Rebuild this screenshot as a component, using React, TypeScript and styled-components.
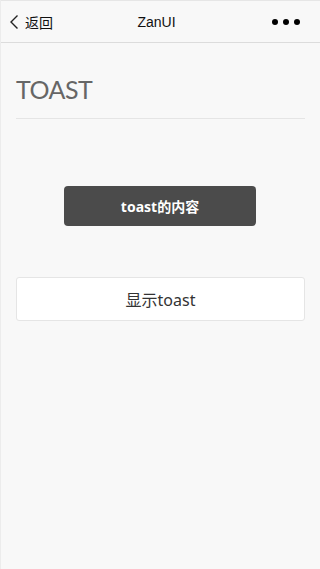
import React from "react";
import styled, { createGlobalStyle } from "styled-components";

const Global = createGlobalStyle`
  html, body { margin: 0; padding: 0; background: #f8f8f8; }
  body { font-family: "Noto Sans", "Noto Sans CJK SC", sans-serif; }
  #root { min-height: 569px; }
`;

const Page = styled.div`
  min-height: 569px;
  background: #f8f8f8;
  border-left: 1px solid #ececec;
  box-sizing: border-box;
  display: flex;
  flex-direction: column;
`;

const NavBar = styled.div`
  height: 43px;
  border-top: 1px solid #e6e6e6;
  border-bottom: 1px solid #dcdcdc;
  background: #f8f8f8;
  display: grid;
  grid-template-columns: 1fr auto 1fr;
  align-items: center;
  padding: 0 16px 0 8px;
  box-sizing: border-box;
`;

const Back = styled.div`
  display: flex;
  align-items: center;
  gap: 6px;
  font-size: 14px;
  color: #111;
  font-family: "Noto Sans CJK SC", sans-serif;
`;

const Title = styled.div`
  font-family: "Liberation Sans", "Noto Sans CJK SC", sans-serif;
  font-size: 14px;
  color: #111;
`;

const Dots = styled.div`
  justify-self: end;
  display: flex;
  gap: 5px;
  padding-right: 4px;
`;

const Dot = styled.span`
  width: 6px;
  height: 6px;
  border-radius: 50%;
  background: #000;
`;

const Content = styled.div`
  padding: 0 15px;
  display: flex;
  flex-direction: column;
`;

const Heading = styled.h1`
  margin: 0;
  padding: 31px 0 14px;
  font-family: "Lato", sans-serif;
  font-weight: 400;
  font-size: 25px;
  letter-spacing: -0.5px;
  color: #666;
  line-height: 30px;
  border-bottom: 1px solid #e5e5e5;
`;

const ToastWrap = styled.div`
  display: flex;
  justify-content: center;
  padding: 67px 0 51px;
  margin-right: 1px;
`;

const Toast = styled.div`
  width: 192px;
  height: 40px;
  border-radius: 4px;
  background: #4b4b4b;
  color: #fff;
  font-size: 14px;
  font-weight: 700;
  display: flex;
  align-items: center;
  justify-content: center;
  font-family: "Noto Sans", "Noto Sans CJK SC", sans-serif;
`;

const Button = styled.button`
  height: 44px;
  width: 100%;
  background: #fff;
  border: 1px solid #e5e5e5;
  border-radius: 3px;
  font-family: "Noto Sans", "Noto Sans CJK SC", sans-serif;
  font-size: 16px;
  color: #333;
  padding: 0;
`;

export default function App() {
  return (
    <>
      <Global />
      <Page>
        <NavBar>
          <Back>
            <svg width="10" height="16" viewBox="0 0 10 16">
              <path d="M8.5 1.5 L2 8 L8.5 14.5" stroke="#222" strokeWidth="1.4" fill="none" />
            </svg>
            <span>返回</span>
          </Back>
          <Title>ZanUI</Title>
          <Dots>
            <Dot />
            <Dot />
            <Dot />
          </Dots>
        </NavBar>
        <Content>
          <Heading>TOAST</Heading>
          <ToastWrap>
            <Toast>toast的内容</Toast>
          </ToastWrap>
          <Button>显示toast</Button>
        </Content>
      </Page>
    </>
  );
}
